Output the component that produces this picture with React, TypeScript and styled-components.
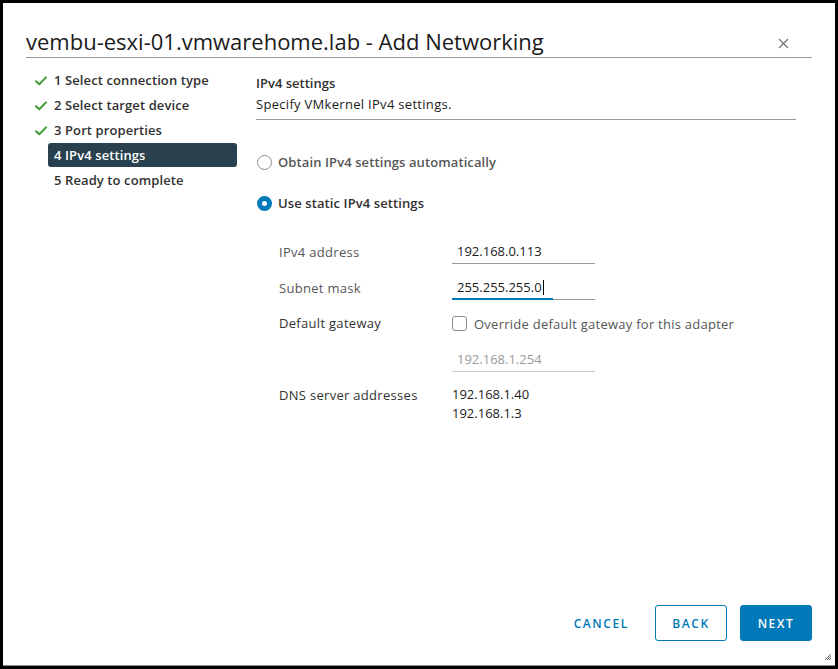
import React from "react";
import styled, { createGlobalStyle } from "styled-components";

const GlobalStyle = createGlobalStyle`
  html, body {
    margin: 0;
    padding: 0;
    background: #000;
  }
  body {
    font-family: "Open Sans", "Lato", sans-serif;
    color: #313131;
  }
`;

const steps = [
  { label: "1 Select connection type", done: true },
  { label: "2 Select target device", done: true },
  { label: "3 Port properties", done: true },
  { label: "4 IPv4 settings", active: true },
  { label: "5 Ready to complete" },
];

const CheckIcon = () => (
  <svg width="12" height="10" viewBox="0 0 12 10">
    <path
      d="M1 5.2 L4.3 8.3 L11 1.4"
      fill="none"
      stroke="#3f9c35"
      strokeWidth="2"
      strokeLinecap="round"
      strokeLinejoin="round"
    />
  </svg>
);

export default function App() {
  return (
    <>
      <GlobalStyle />
      <Dialog>
        <Header>
          <Title>vembu-esxi-01.vmwarehome.lab - Add Networking</Title>
          <CloseButton aria-label="Close">
            <svg width="11" height="11" viewBox="0 0 11 11">
              <path d="M1 1 L10 10 M10 1 L1 10" stroke="#737373" strokeWidth="1.2" />
            </svg>
          </CloseButton>
        </Header>
        <Body>
          <Nav>
            {steps.map((s) => (
              <NavRow key={s.label}>
                <NavIcon>{s.done && <CheckIcon />}</NavIcon>
                <NavItem $active={!!s.active}>{s.label}</NavItem>
              </NavRow>
            ))}
          </Nav>
          <Content>
            <SectionHead>
              <SectionTitle>IPv4 settings</SectionTitle>
              <SectionDesc>Specify VMkernel IPv4 settings.</SectionDesc>
            </SectionHead>
            <RadioGroup>
              <RadioRow>
                <Radio $checked={false} />
                <RadioLabel $checked={false}>Obtain IPv4 settings automatically</RadioLabel>
              </RadioRow>
              <RadioRow>
                <Radio $checked />
                <RadioLabel $checked>Use static IPv4 settings</RadioLabel>
              </RadioRow>
            </RadioGroup>
            <Form>
              <FieldLabel>IPv4 address</FieldLabel>
              <Field>192.168.0.113</Field>
              <FieldLabel>Subnet mask</FieldLabel>
              <Field $focused>
                255.255.255.0
                <Caret />
              </Field>
              <FieldLabel $dark>Default gateway</FieldLabel>
              <CheckRow>
                <CheckBox />
                <CheckLabel>Override default gateway for this adapter</CheckLabel>
              </CheckRow>
              <span />
              <Field $disabled>192.168.1.254</Field>
              <FieldLabel $dark>DNS server addresses</FieldLabel>
              <DnsList>
                <div>192.168.1.40</div>
                <div>192.168.1.3</div>
              </DnsList>
            </Form>
          </Content>
        </Body>
        <Footer>
          <Button $variant="flat">CANCEL</Button>
          <Button $variant="outline">BACK</Button>
          <Button $variant="primary">NEXT</Button>
        </Footer>
        <Grip viewBox="0 0 8 8" width="8" height="8">
          <path d="M7 1 L1 7 M7 3 L3 7 M7 5 L5 7" stroke="#555" strokeWidth="0.9" />
        </Grip>
      </Dialog>
    </>
  );
}

const Dialog = styled.div`
  position: relative;
  box-sizing: border-box;
  margin: 3px;
  width: 832px;
  height: 663px;
  background: #fff;
  border-bottom: 1px solid #8c8c8c;
  display: flex;
  flex-direction: column;
`;

const Header = styled.div`
  display: flex;
  align-items: center;
  justify-content: space-between;
  margin: 24px 23px 0 23px;
  padding-bottom: 2px;
  border-bottom: 1px solid #9a9a9a;
`;

const Title = styled.h1`
  margin: 0;
  font-size: 22px;
  line-height: 28px;
  font-weight: 400;
  color: #1b1b1b;
`;

const CloseButton = styled.button`
  border: none;
  background: none;
  padding: 0;
  margin-right: 23px;
  margin-top: 4px;
  display: flex;
  cursor: pointer;
`;

const Body = styled.div`
  flex: 1;
  display: flex;
  padding: 10px 0 0 23px;
`;

const Nav = styled.div`
  width: 211px;
  display: flex;
  flex-direction: column;
`;

const NavRow = styled.div`
  display: flex;
  align-items: center;
  height: 25px;
`;

const NavIcon = styled.div`
  width: 22px;
  display: flex;
  align-items: center;
  padding-left: 9px;
  box-sizing: border-box;
`;

const NavItem = styled.div<{ $active: boolean }>`
  flex: 1;
  height: 24px;
  margin-bottom: 1px;
  display: flex;
  align-items: center;
  padding-left: 6px;
  border-radius: 3px;
  font-size: 13px;
  font-weight: 600;
  letter-spacing: 0.1px;
  color: ${(p) => (p.$active ? "#fff" : "#313131")};
  background: ${(p) => (p.$active ? "#29414e" : "transparent")};
`;

const Content = styled.div`
  margin-left: 19px;
  width: 540px;
  padding-top: 6px;
  display: flex;
  flex-direction: column;
`;

const SectionHead = styled.div`
  padding-bottom: 6px;
  border-bottom: 1px solid #9a9a9a;
`;

const SectionTitle = styled.div`
  font-size: 13px;
  line-height: 18px;
  font-weight: 600;
  color: #313131;
`;

const SectionDesc = styled.div`
  margin-top: 3px;
  font-size: 13px;
  line-height: 18px;
  letter-spacing: 0.3px;
  color: #1b1b1b;
`;

const RadioGroup = styled.div`
  margin-top: 33px;
  display: flex;
  flex-direction: column;
  gap: 23px;
`;

const RadioRow = styled.div`
  display: flex;
  align-items: center;
  height: 18px;
`;

const Radio = styled.span<{ $checked: boolean }>`
  box-sizing: border-box;
  width: 15px;
  height: 15px;
  margin-left: 1px;
  border-radius: 50%;
  border: ${(p) => (p.$checked ? "5px solid #0079b8" : "1px solid #8c8c8c")};
  background: #fff;
`;

const RadioLabel = styled.span<{ $checked: boolean }>`
  margin-left: 6px;
  font-size: 13px;
  font-weight: 600;
  letter-spacing: 0.1px;
  color: ${(p) => (p.$checked ? "#313131" : "#565656")};
`;

const Form = styled.div`
  margin-top: 27px;
  padding-left: 23px;
  display: grid;
  grid-template-columns: 173px 1fr;
  grid-auto-rows: 25px;
  row-gap: 11px;
  align-items: center;
`;

const FieldLabel = styled.div<{ $dark?: boolean }>`
  font-size: 13px;
  letter-spacing: 0.3px;
  color: ${(p) => (p.$dark ? "#313131" : "#565656")};
  align-self: ${(p) => (p.$dark ? "start" : "center")};
  line-height: ${(p) => (p.$dark ? "19px" : "normal")};
  padding-top: ${(p) => (p.$dark ? "3px" : "0")};
`;

const Field = styled.div<{ $focused?: boolean; $disabled?: boolean }>`
  position: relative;
  box-sizing: border-box;
  width: 143px;
  height: 25px;
  padding-left: 5px;
  display: flex;
  align-items: center;
  font-size: 13px;
  color: ${(p) => (p.$disabled ? "#9a9a9a" : "#1b1b1b")};
  border-bottom: 1px solid ${(p) => (p.$disabled ? "#c8c8c8" : "#9a9a9a")};
  ${(p) =>
    p.$focused &&
    `
    &::after {
      content: "";
      position: absolute;
      left: 0;
      bottom: -1px;
      width: 101px;
      height: 2px;
      background: #0079b8;
    }
  `}
`;

const Caret = styled.span`
  display: inline-block;
  width: 1px;
  height: 15px;
  margin-left: 1px;
  background: #000;
`;

const CheckRow = styled.div`
  display: flex;
  align-items: center;
`;

const CheckBox = styled.span`
  box-sizing: border-box;
  width: 15px;
  height: 15px;
  border: 1px solid #8c8c8c;
  border-radius: 3px;
`;

const CheckLabel = styled.span`
  margin-left: 7px;
  font-size: 13px;
  letter-spacing: 0.25px;
  color: #565656;
`;

const DnsList = styled.div`
  align-self: start;
  padding-top: 2px;
  font-size: 13px;
  line-height: 19px;
  color: #1b1b1b;
`;

const Footer = styled.div`
  display: flex;
  justify-content: flex-end;
  gap: 13px;
  padding: 0 23px 24px 0;
`;

const Button = styled.button<{ $variant: "flat" | "outline" | "primary" }>`
  box-sizing: border-box;
  height: 36px;
  min-width: 72px;
  padding: 0 12px;
  border-radius: 3px;
  font-family: "Open Sans", "Lato", sans-serif;
  font-size: 12px;
  font-weight: 600;
  letter-spacing: 1.6px;
  cursor: pointer;
  border: 1px solid
    ${(p) => (p.$variant === "flat" ? "transparent" : "#0079b8")};
  background: ${(p) => (p.$variant === "primary" ? "#0079b8" : "#fff")};
  color: ${(p) => (p.$variant === "primary" ? "#fff" : "#0079b8")};
`;

const Grip = styled.svg`
  position: absolute;
  right: 3px;
  bottom: 4px;
`;
